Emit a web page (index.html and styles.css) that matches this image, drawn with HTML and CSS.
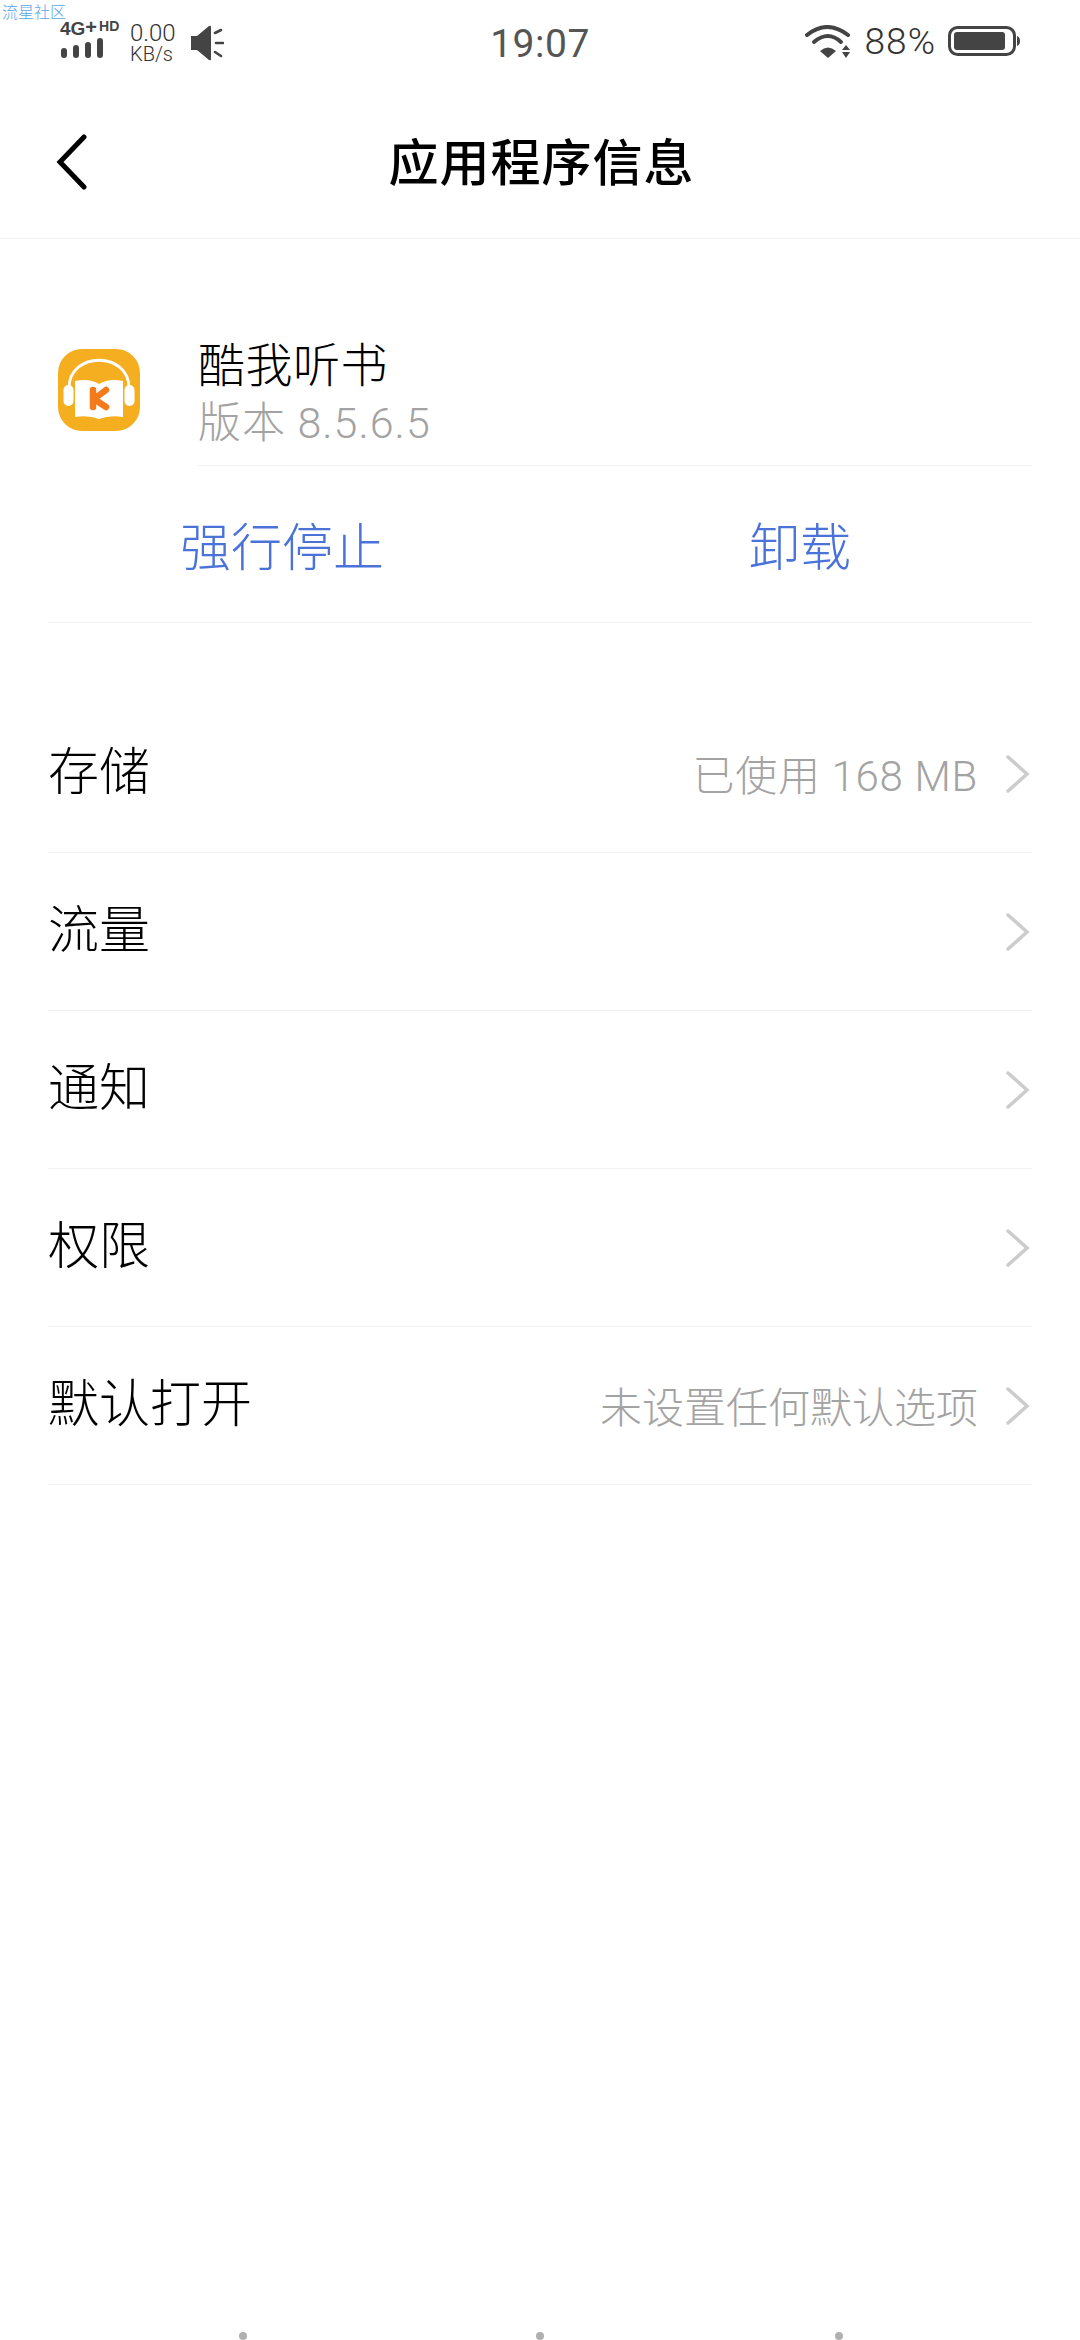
FILE: index.html
```html
<!DOCTYPE html>
<html lang="zh">
<head>
<meta charset="utf-8">
<title>应用程序信息</title>
<link rel="stylesheet" href="styles.css">
</head>
<body>
<div class="screen">
  <div class="watermark">流星社区</div>
  <header class="status">
    <div class="status-left">
      <div class="signal">
        <div class="net"><span>4G</span><b>+</b><i>HD</i></div>
        <svg class="bars" width="44" height="21" viewBox="0 0 44 21"><g fill="#444"><rect x="1" y="11" width="6" height="10" rx="3"/><rect x="13" y="8" width="6" height="13" rx="3"/><rect x="25" y="5" width="6" height="16" rx="3"/><rect x="37" y="1" width="6" height="20" rx="3"/></g></svg>
      </div>
      <div class="speed"><span>0.00</span><span>KB/s</span></div>
      <svg class="mute" width="34" height="36" viewBox="0 0 34 36"><path d="M1 11h6L19 1q2-1 2 1v32q0 2-2 1L7 25H1z" fill="#444"/><path d="M25 8l6-3M26 18h7M25 27l6 4" stroke="#444" stroke-width="2.600" stroke-linecap="round" fill="none"/></svg>
    </div>
    <div class="clock">19:07</div>
    <div class="status-right">
      <svg class="wifi" width="48" height="34" viewBox="0 0 48 34"><g fill="none" stroke="#444" stroke-width="4" stroke-linecap="round"><path d="M2 10Q22-6 43 10"/><path d="M9 17Q23 5 36 17"/></g><path d="M15 26Q23 19 31 26L23 33z" fill="#444"/><path d="M41 20l4 5h-8zM41 33l4-6h-8z" fill="#444"/></svg>
      <span class="pct">88%</span>
      <svg width="74" height="32" viewBox="0 0 74 32"><rect x="1.500" y="1.500" width="65" height="27" rx="8" fill="none" stroke="#444" stroke-width="3"/><rect x="6" y="6" width="51" height="18" rx="3" fill="#444"/><path d="M69 10q3 1 3 5t-3 5z" fill="#444"/></svg>
    </div>
  </header>

  <nav class="nav">
    <svg class="back" width="36" height="56" viewBox="0 0 36 56"><path d="M31 3L7 28l24 25" fill="none" stroke="#000" stroke-width="5" stroke-linecap="round"/></svg>
    <h1>应用程序信息</h1>
  </nav>

  <section class="app">
    <div class="app-row">
      <svg class="app-icon" width="84" height="84" viewBox="0 0 84 84">
        <rect x="1" y="1" width="82" height="82" rx="24" fill="#f6ae21"/>
        <path d="M12 40C12 3 72 3 72 40" fill="none" stroke="#fff" stroke-width="2.800"/>
        <rect x="6.500" y="37" width="10" height="21" rx="5" fill="#fff"/>
        <rect x="67.500" y="37" width="10" height="21" rx="5" fill="#fff"/>
        <path d="M18 33Q32 30 42 36Q52 30 66 33V69Q52 67 42 71Q32 67 18 69z" fill="#fff"/>
        <path d="M36 42V59M49 42L37 51L49 59" fill="none" stroke="#f47a1c" stroke-width="6.500" stroke-linecap="round" stroke-linejoin="round"/>
      </svg>
      <div class="app-info">
        <div class="app-name">酷我听书</div>
        <div class="app-ver">版本 8.5.6.5</div>
      </div>
    </div>
    <div class="actions">
      <a class="action">强行停止</a>
      <a class="action">卸载</a>
    </div>
  </section>

  <ul class="list">
    <li class="row"><span class="label">存储</span><span class="value value-wide">已使用 168 MB</span><svg class="chev" width="24" height="38" viewBox="0 0 24 38"><path d="M2 2l19 17L2 36" fill="none" stroke="#ccc" stroke-width="3.500" stroke-linecap="round"/></svg></li>
    <li class="row"><span class="label">流量</span><svg class="chev" width="24" height="38" viewBox="0 0 24 38"><path d="M2 2l19 17L2 36" fill="none" stroke="#ccc" stroke-width="3.500" stroke-linecap="round"/></svg></li>
    <li class="row"><span class="label">通知</span><svg class="chev" width="24" height="38" viewBox="0 0 24 38"><path d="M2 2l19 17L2 36" fill="none" stroke="#ccc" stroke-width="3.500" stroke-linecap="round"/></svg></li>
    <li class="row"><span class="label">权限</span><svg class="chev" width="24" height="38" viewBox="0 0 24 38"><path d="M2 2l19 17L2 36" fill="none" stroke="#ccc" stroke-width="3.500" stroke-linecap="round"/></svg></li>
    <li class="row"><span class="label">默认打开</span><span class="value">未设置任何默认选项</span><svg class="chev" width="24" height="38" viewBox="0 0 24 38"><path d="M2 2l19 17L2 36" fill="none" stroke="#ccc" stroke-width="3.500" stroke-linecap="round"/></svg></li>
  </ul>

  <div class="dots"><i></i><i></i><i></i></div>
</div>
</body>
</html>
```
FILE: styles.css
```css
* { box-sizing: border-box; }
html, body { margin: 0; padding: 0; background: #fff; }
body { font-family: "Noto Sans CJK SC", "Noto Sans", sans-serif; }
.screen { position: relative; width: 1080px; height: 2340px; overflow: hidden; background: #fff; }
.watermark { position: absolute; left: 2px; top: 3px; font-size: 16px; line-height: 16px; font-weight: 300; color: #5aa5e8; }
.status { height: 84px; display: flex; align-items: flex-start; justify-content: space-between; padding: 0 58px 0 60px; position: relative; color: #444; }
.status-left { display: flex; align-items: flex-start; }
.signal { width: 70px; display: flex; flex-direction: column; padding-top: 20px; }
.net { display: flex; align-items: flex-start; font: 700 19px/17px "Liberation Sans", sans-serif; color: #444; white-space: nowrap; height: 17px; }
.net b { font-size: 20px; line-height: 14px; }
.net i { font-style: normal; font-size: 14px; line-height: 12px; margin-left: 2px; }
.bars { display: block; }
.speed { display: flex; flex-direction: column; width: 60px; padding-top: 22px; font-family: "Roboto", sans-serif; font-weight: 300; color: #333; }
.speed span:first-child { font-size: 24px; line-height: 22px; }
.speed span:last-child { font-size: 20px; line-height: 20px; }
.mute { margin-top: 25px; }
.clock { position: absolute; left: 440px; right: 440px; top: 22px; text-align: center; font: 400 39px/44px "Roboto", sans-serif; color: #555; letter-spacing: 0.5px; }
.status-right { display: flex; align-items: flex-start; padding-top: 26px; }
.wifi { margin-top: -1px; margin-right: 12px; }
.pct { font: 300 37px/32px "Roboto", sans-serif; color: #333; margin-right: 12px; letter-spacing: 1px; }
.nav { height: 155px; border-bottom: 1px solid #f1f1f1; position: relative; display: flex; align-items: center; justify-content: center; padding: 0 0 4px 3px; }
.nav h1 { margin: 0; font-size: 50px; font-weight: 500; color: #000; letter-spacing: 1px; line-height: 60px; }
.back { position: absolute; left: 53px; top: 50px; }
.app { margin: 0 48px; height: 384px; border-bottom: 1px solid #f1f1f1; }
.app-row { display: flex; padding-top: 90px; align-items: flex-start; }
.app-icon { margin: 19px 0 0 9px; flex: none; }
.app-info { margin-left: 57px; flex: 1; height: 137px; border-bottom: 1px solid #f1f1f1; padding-top: 3px; }
.app-name { font-size: 47px; line-height: 60px; color: #000; font-weight: 300; letter-spacing: 0.5px; }
.app-ver { font-family: "Roboto", "Noto Sans CJK SC", sans-serif; font-size: 43px; line-height: 52px; margin-top: 5px; color: #a3a3a3; font-weight: 300; letter-spacing: 1px; }
.actions { display: flex; height: 155px; align-items: center; }
.action { font-size: 51px; color: #4a72d9; text-align: center; white-space: nowrap; font-weight: 300; }
.action:first-child { margin-left: 132px; width: 204px; }
.action:last-child { margin-left: 365px; width: 102px; }
.list { list-style: none; margin: 72px 48px 0; padding: 0; }
.row { height: 158px; display: flex; align-items: center; border-bottom: 1px solid #f1f1f1; }
.label { font-size: 51px; color: #000; flex: 1; position: relative; top: -6px; font-weight: 300; }
.value { font-family: "Roboto", "Noto Sans CJK SC", sans-serif; font-size: 42px; color: #a3a3a3; margin: 0 28px 2px 0; font-weight: 300; }
.value-wide { letter-spacing: 0.7px; }
.chev { flex: none; margin-right: 2px; }
.dots { position: absolute; left: 0; right: 0; bottom: 0; height: 8px; }
.dots i { position: absolute; top: 0; width: 8px; height: 8px; border-radius: 50%; background: #b0b0b0; }
.dots i:nth-child(1) { left: 239px; }
.dots i:nth-child(2) { left: 536px; }
.dots i:nth-child(3) { left: 835px; }
```
